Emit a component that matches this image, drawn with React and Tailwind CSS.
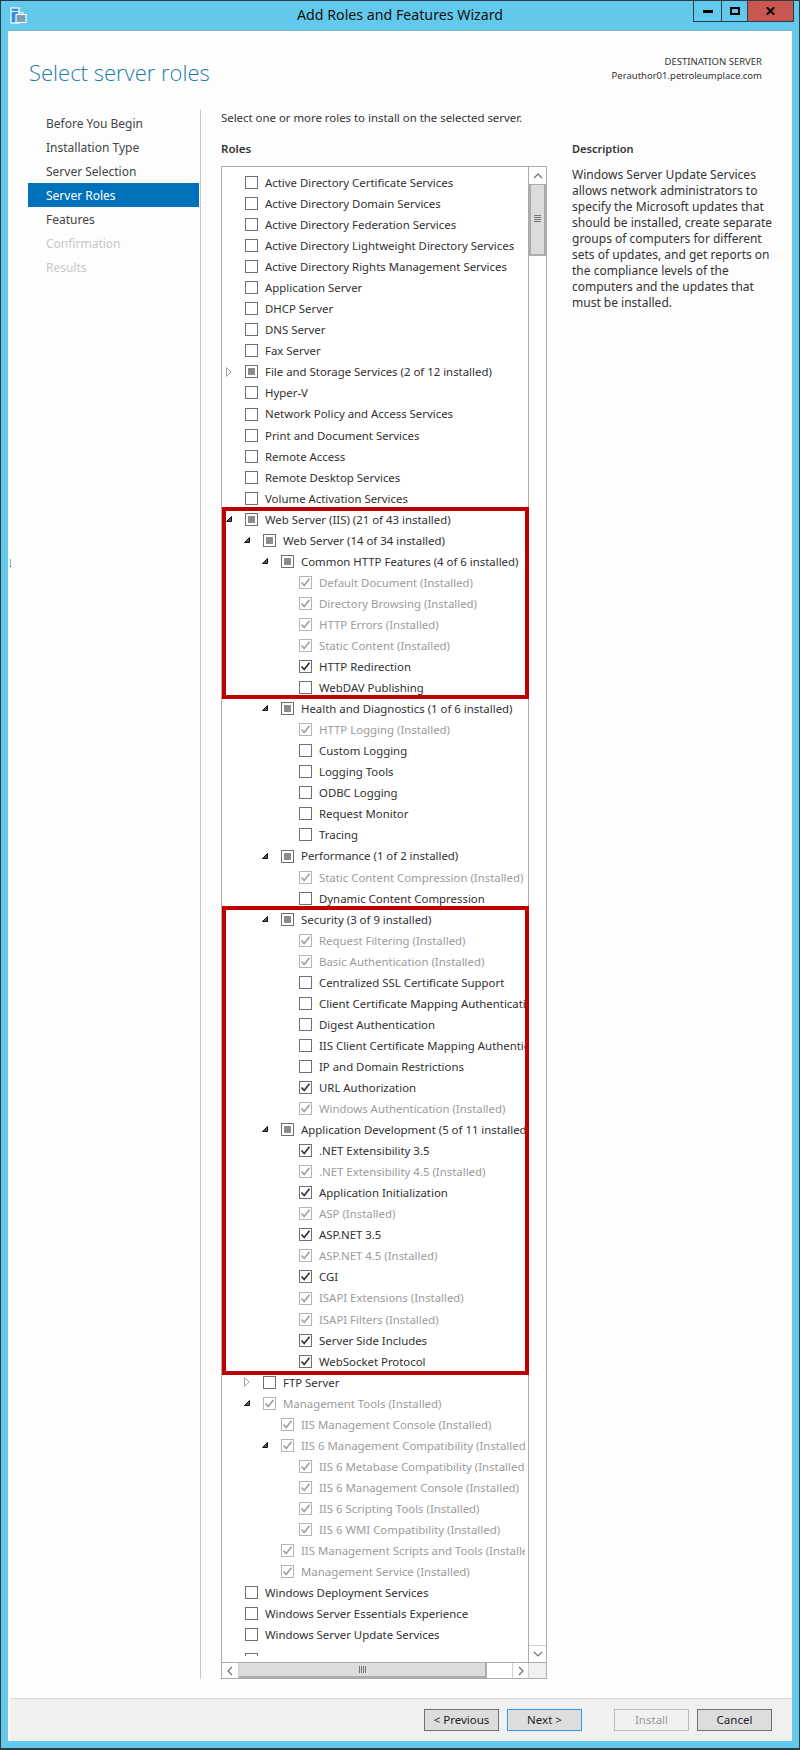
import React from "react";

const F = "font-['Noto_Sans','Open_Sans',sans-serif]";

// [level, state, label, arrow]  state: n none, p partial, c checked, g grey-checked
const rows = [
  [0, "n", "Active Directory Certificate Services"],
  [0, "n", "Active Directory Domain Services"],
  [0, "n", "Active Directory Federation Services"],
  [0, "n", "Active Directory Lightweight Directory Services"],
  [0, "n", "Active Directory Rights Management Services"],
  [0, "n", "Application Server"],
  [0, "n", "DHCP Server"],
  [0, "n", "DNS Server"],
  [0, "n", "Fax Server"],
  [0, "p", "File and Storage Services (2 of 12 installed)", "r"],
  [0, "n", "Hyper-V"],
  [0, "n", "Network Policy and Access Services"],
  [0, "n", "Print and Document Services"],
  [0, "n", "Remote Access"],
  [0, "n", "Remote Desktop Services"],
  [0, "n", "Volume Activation Services"],
  [0, "p", "Web Server (IIS) (21 of 43 installed)", "d"],
  [1, "p", "Web Server (14 of 34 installed)", "d"],
  [2, "p", "Common HTTP Features (4 of 6 installed)", "d"],
  [3, "g", "Default Document (Installed)"],
  [3, "g", "Directory Browsing (Installed)"],
  [3, "g", "HTTP Errors (Installed)"],
  [3, "g", "Static Content (Installed)"],
  [3, "c", "HTTP Redirection"],
  [3, "n", "WebDAV Publishing"],
  [2, "p", "Health and Diagnostics (1 of 6 installed)", "d"],
  [3, "g", "HTTP Logging (Installed)"],
  [3, "n", "Custom Logging"],
  [3, "n", "Logging Tools"],
  [3, "n", "ODBC Logging"],
  [3, "n", "Request Monitor"],
  [3, "n", "Tracing"],
  [2, "p", "Performance (1 of 2 installed)", "d"],
  [3, "g", "Static Content Compression (Installed)"],
  [3, "n", "Dynamic Content Compression"],
  [2, "p", "Security (3 of 9 installed)", "d"],
  [3, "g", "Request Filtering (Installed)"],
  [3, "g", "Basic Authentication (Installed)"],
  [3, "n", "Centralized SSL Certificate Support"],
  [3, "n", "Client Certificate Mapping Authentication"],
  [3, "n", "Digest Authentication"],
  [3, "n", "IIS Client Certificate Mapping Authentication"],
  [3, "n", "IP and Domain Restrictions"],
  [3, "c", "URL Authorization"],
  [3, "g", "Windows Authentication (Installed)"],
  [2, "p", "Application Development (5 of 11 installed)", "d"],
  [3, "c", ".NET Extensibility 3.5"],
  [3, "g", ".NET Extensibility 4.5 (Installed)"],
  [3, "c", "Application Initialization"],
  [3, "g", "ASP (Installed)"],
  [3, "c", "ASP.NET 3.5"],
  [3, "g", "ASP.NET 4.5 (Installed)"],
  [3, "c", "CGI"],
  [3, "g", "ISAPI Extensions (Installed)"],
  [3, "g", "ISAPI Filters (Installed)"],
  [3, "c", "Server Side Includes"],
  [3, "c", "WebSocket Protocol"],
  [1, "n", "FTP Server", "r"],
  [1, "g", "Management Tools (Installed)", "d"],
  [2, "g", "IIS Management Console (Installed)"],
  [2, "g", "IIS 6 Management Compatibility (Installed)", "d"],
  [3, "g", "IIS 6 Metabase Compatibility (Installed)"],
  [3, "g", "IIS 6 Management Console (Installed)"],
  [3, "g", "IIS 6 Scripting Tools (Installed)"],
  [3, "g", "IIS 6 WMI Compatibility (Installed)"],
  [2, "g", "IIS Management Scripts and Tools (Installed)"],
  [2, "g", "Management Service (Installed)"],
  [0, "n", "Windows Deployment Services"],
  [0, "n", "Windows Server Essentials Experience"],
  [0, "n", "Windows Server Update Services"],
];

const indent = ["pl-[4px]", "pl-[22px]", "pl-[40px]", "pl-[58px]"];

function Arrow({ type }) {
  if (type === "d")
    return (
      <svg width="6" height="6" viewBox="0 0 6 6" className="absolute left-0 top-[3px]">
        <path d="M5.5 0.5V5.5H0.5Z" fill="#595959" stroke="#111" strokeWidth="1" />
      </svg>
    );
  if (type === "r")
    return (
      <svg width="6" height="10" viewBox="0 0 6 10" className="absolute left-0 top-[1.5px]">
        <path d="M0.5 0.5L5 5L0.5 9.5Z" fill="#fff" stroke="#a6a6a6" strokeWidth="1" />
      </svg>
    );
  return null;
}

function Check({ state }) {
  const grey = state === "g";
  return (
    <span
      className={`flex h-[13px] w-[13px] shrink-0 items-center justify-center border ${
        grey ? "border-[#b4b4b4]" : "border-[#707070]"
      } bg-white`}
    >
      {state === "p" && <span className="h-[7px] w-[7px] bg-[#8c8c8c]" />}
      {(state === "c" || grey) && (
        <svg width="11" height="11" viewBox="0 0 11 11">
          <path
            d="M1.5 5.5L4.2 8.5L9.5 1.8"
            fill="none"
            stroke={grey ? "#a0a0a0" : "#333"}
            strokeWidth="1.7"
          />
        </svg>
      )}
    </span>
  );
}

function Row({ level, state, label, arrow }) {
  return (
    <div className={`flex h-[21.05px] items-center whitespace-nowrap ${indent[level]}`}>
      <span className="relative mr-[7px] ml-[19px] flex items-center">
        <span className="absolute top-0 left-[-19px] h-[13px] w-[10px]">
          <Arrow type={arrow} />
        </span>
        <Check state={state} />
      </span>
      <span className={state === "g" ? "text-[#9b9b9b]" : "text-[#303030]"}>{label}</span>
    </div>
  );
}

function ScrollButton({ dir, className }) {
  const paths = {
    u: "M1 6L5 2L9 6",
    d: "M1 2L5 6L9 2",
    l: "M6 1L2 5L6 9",
    r: "M2 1L6 5L2 9",
  };
  return (
    <div className={`flex items-center justify-center bg-white ${className}`}>
      <svg width="10" height="10" viewBox="0 0 10 10">
        <path d={paths[dir]} fill="none" stroke="#707070" strokeWidth="1.2" transform={dir === "l" || dir === "r" ? "translate(1 0)" : "translate(0 1)"} />
      </svg>
    </div>
  );
}

function WinBtn({ label, cls }) {
  return (
    <button className={`h-[22px] w-[75px] border text-[11.5px] leading-none ${cls}`}>{label}</button>
  );
}

const steps = [
  ["Before You Begin", "text-[#444]"],
  ["Installation Type", "text-[#444]"],
  ["Server Selection", "text-[#444]"],
  ["Server Roles", "bg-[#0072bc] text-white"],
  ["Features", "text-[#444]"],
  ["Confirmation", "text-[#c8c8c8]"],
  ["Results", "text-[#c8c8c8]"],
];

const desc = [
  "Windows Server Update Services",
  "allows network administrators to",
  "specify the Microsoft updates that",
  "should be installed, create separate",
  "groups of computers for different",
  "sets of updates, and get reports on",
  "the compliance levels of the",
  "computers and the updates that",
  "must be installed.",
];

export default function App() {
  return (
    <div className={`${F} relative flex h-[1750px] w-[800px] flex-col overflow-hidden border border-b-2 border-[#2e3b41] bg-[#63c9ec] text-[12px]`}>
      {/* Small capture artefact on the left edge */}
      <span className="absolute top-[558px] left-[9px] h-[7px] w-px bg-[#63c9ec]" />
      <span className="absolute top-[565px] left-[9px] h-px w-px bg-[#2e3b41]" />

      {/* Title bar */}
      <div className="relative flex h-[29px] shrink-0 items-center justify-center">
        <svg width="17" height="17" viewBox="0 0 17 17" className="absolute left-[9px] top-[6px]">
          <rect x="1" y="1" width="8" height="15" fill="#2f8fdc" stroke="#fff" strokeWidth="1.2" />
          <rect x="1" y="4" width="8" height="1" fill="#fff" />
          <rect x="6" y="7.5" width="10" height="8" fill="#7a9fb4" stroke="#fff" strokeWidth="1.1" />
          <path d="M9 7.5V5.6H13V7.5" fill="none" stroke="#fff" strokeWidth="1" />
        </svg>
        <span className="text-[14.2px] leading-none text-[#111]">Add Roles and Features Wizard</span>
        <div className="absolute top-[-1px] right-[5px] flex h-[22px] border border-t-0 border-[#2a3f4c]">
          <div className="flex w-[28px] items-center justify-center border-r border-[#2a3f4c]">
            <span className="mt-[2px] h-[3px] w-[10px] bg-black" />
          </div>
          <div className="flex w-[26px] items-center justify-center border-r border-[#2a3f4c]">
            <span className="h-[8px] w-[10px] border-2 border-black" />
          </div>
          <div className="flex w-[45px] items-center justify-center bg-[#c75750]">
            <svg width="9" height="8" viewBox="0 0 9 8">
              <path d="M0.8 0.3L8.2 7.7M8.2 0.3L0.8 7.7" stroke="#000" strokeWidth="2" />
            </svg>
          </div>
        </div>
      </div>

      {/* Body */}
      <div className="mx-[7px] mb-[7px] flex flex-1 flex-col border-t border-[#82b3c8] bg-[#fdfdfd]">
        {/* Header */}
        <div className="flex h-[79px] shrink-0 items-start justify-between pr-[30px] pl-[21px]">
          <h1 className="mt-[24px] font-['Open_Sans'] text-[22px] leading-[34px] font-light text-[#1f7aa8]">Select server roles</h1>
          <div className="mt-[24px] text-right text-[9.5px] leading-[14px] text-[#333]">
            <div>DESTINATION SERVER</div>
            <div>Perauthor01.petroleumplace.com</div>
          </div>
        </div>

        {/* Main */}
        <div className="flex flex-1">
          <nav className="ml-[20px] w-[171px] shrink-0 pt-[1px]">
            {steps.map(([t, c]) => (
              <div key={t} className={`flex h-[24px] items-center pt-[2px] pl-[18px] ${c}`}>{t}</div>
            ))}
          </nav>
          <div className="ml-[1px] h-[1569px] w-px bg-[#c8c8c8]" />
          <div className="ml-[20px] flex flex-col">
            <div className="text-[11.4px] leading-[16px] text-[#333]">Select one or more roles to install on the selected server.</div>
            <div className="flex">
              <div className="w-[351px] shrink-0">
                <div className="mt-[15px] mb-[9px] text-[11.5px] leading-[16px] font-semibold text-[#333]">Roles</div>
                {/* List box */}
                <div className="relative flex h-[1513px] w-[326px] flex-col border border-[#acacac] bg-white">
                  <div className="flex min-h-0 flex-1">
                    <div className="relative min-w-0 flex-1">
                      <div className="h-[1489px] w-[303px] overflow-hidden pt-[5px] text-[11.4px]">
                        {rows.map(([l, s, t, a]) => (
                          <Row key={t + l} level={l} state={s} label={t} arrow={a} />
                        ))}
                        <div className="mt-[7.5px] flex h-[3px] items-start overflow-hidden pl-[4px]">
                          <span className="mr-[7px] ml-[19px] h-[13px] w-[13px] shrink-0 border border-[#707070]" />
                          <span className="-mt-[2px] text-[#303030]">Remote Desktop Services</span>
                        </div>
                      </div>
                    </div>
                    <div className="flex w-[18px] shrink-0 flex-col border-l border-[#acacac]">
                      <ScrollButton dir="u" className="h-[17px]" />
                      <div className="flex h-[72px] items-center justify-center border-2 border-t border-[#acacac] bg-[#dcdcdc]">
                        <div className="mt-[-2px] flex flex-col gap-[1px]">
                          <span className="h-px w-[7px] bg-[#777]" />
                          <span className="h-px w-[7px] bg-[#777]" />
                          <span className="h-px w-[7px] bg-[#777]" />
                          <span className="h-px w-[7px] bg-[#777]" />
                        </div>
                      </div>
                      <div className="flex-1" />
                      <ScrollButton dir="d" className="h-[17px] border-t border-[#d0d0d0]" />
                    </div>
                  </div>
                  <div className="flex h-[16px] shrink-0 border-t border-[#acacac]">
                    <ScrollButton dir="l" className="w-[17px] border-r border-[#d0d0d0]" />
                    <div className="flex w-[248px] items-center justify-center border-2 border-t-0 border-l-0 border-[#acacac] bg-[#dcdcdc]">
                      <div className="flex gap-[1px]">
                        <span className="h-[7px] w-px bg-[#777]" />
                        <span className="h-[7px] w-px bg-[#777]" />
                        <span className="h-[7px] w-px bg-[#777]" />
                        <span className="h-[7px] w-px bg-[#777]" />
                      </div>
                    </div>
                    <div className="flex-1" />
                    <ScrollButton dir="r" className="w-[16px] border-l border-[#d0d0d0]" />
                    <div className="w-[18px] border-l border-[#d0d0d0] bg-[#f0f0f0]" />
                  </div>
                  {/* Red annotation rectangles */}
                  <div className="absolute top-[340px] left-0 h-[192px] w-[307px] border-4 border-[#c00000]" />
                  <div className="absolute top-[739px] left-0 h-[469px] w-[307px] border-4 border-[#c00000]" />
                </div>
              </div>
              <div className="w-[195px]">
                <div className="mt-[15px] text-[11px] leading-[16px] font-semibold text-[#333]">Description</div>
                <div className="mt-[10px] leading-[16px] whitespace-nowrap text-[#333]">
                  {desc.map((d) => (
                    <div key={d}>{d}</div>
                  ))}
                </div>
              </div>
            </div>
          </div>
        </div>

        {/* Footer */}
        <div className="ml-[2px] flex h-[43px] shrink-0 items-center justify-end border-t border-[#d9d9d9] bg-[#f0f0f0] pr-[20px]">
          <WinBtn label="< Previous" cls="border-[#707070] bg-[#dddddd] text-[#222]" />
          <WinBtn label="Next >" cls="ml-[8px] border-[#3399ff] bg-[#dddddd] text-[#222]" />
          <WinBtn label="Install" cls="ml-[32px] border-[#bcbcbc] bg-[#f0f0f0] text-[#9a9a9a]" />
          <WinBtn label="Cancel" cls="ml-[8px] border-[#707070] bg-[#dddddd] text-[#222]" />
        </div>
      </div>
    </div>
  );
}
